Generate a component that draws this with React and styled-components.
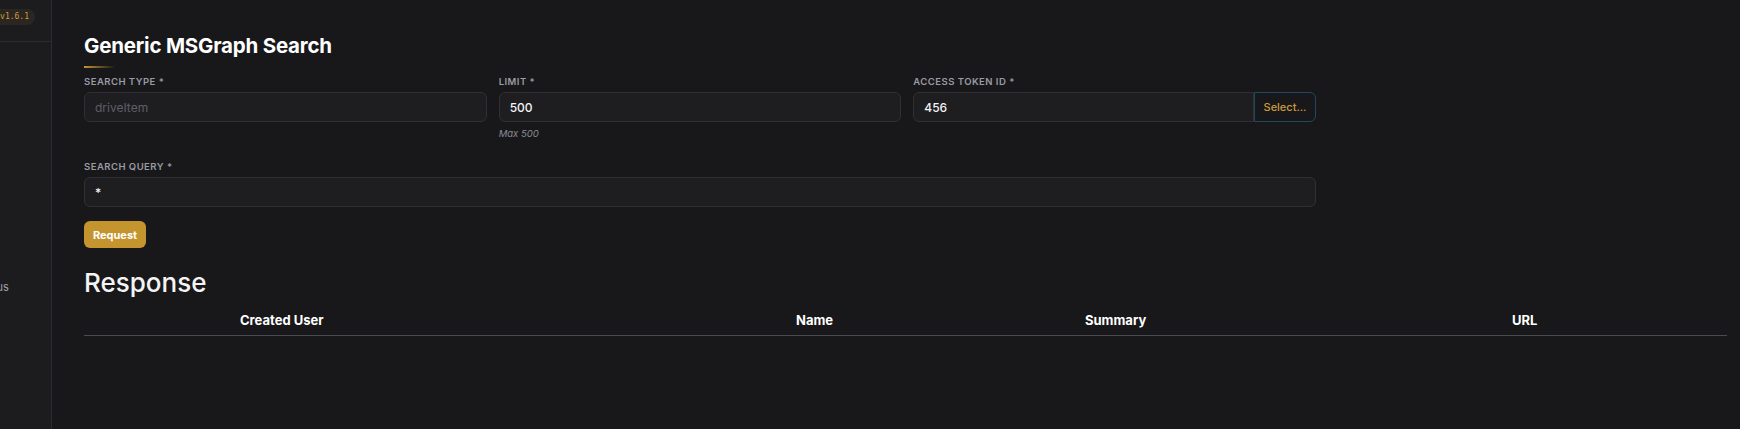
import React from 'react'
import styled, { createGlobalStyle } from 'styled-components'

const GlobalStyle = createGlobalStyle`
  * { box-sizing: border-box; }
  html, body {
    margin: 0;
    padding: 0;
    background: #18181b;
    color: #f4f4f5;
    font-family: Inter, "Noto Sans", "Liberation Sans", sans-serif;
  }
`

const Shell = styled.div`
  display: flex;
  height: 429px;
  background: #18181b;
  overflow: hidden;
`

/* drawer is collapsed: only its right edge peeks out */
const Sidebar = styled.aside`
  width: 52px;
  flex-shrink: 0;
  background: #1c1c1f;
  border-right: 1px solid #2c2c30;
  overflow: hidden;
`

const Drawer = styled.div`
  width: 240px;
  margin-left: -189px;
  display: flex;
  flex-direction: column;
`

const DrawerHead = styled.div`
  height: 42px;
  display: flex;
  align-items: center;
  justify-content: flex-end;
  padding-right: 16px;
  border-bottom: 1px solid #2c2c30;
`

const Version = styled.span`
  font-family: "DejaVu Sans Mono", "Liberation Mono", monospace;
  font-size: 8px;
  line-height: 16px;
  height: 16px;
  color: #d49b3a;
  background: #2a2722;
  border-radius: 8px;
  padding: 0 6px 0 10px;
  margin-bottom: 8px;
`

const Nav = styled.nav`
  display: flex;
  flex-direction: column;
  padding: 0 0 0 165px;
  margin-top: 238px;
`

const NavItem = styled.a`
  font-size: 11px;
  color: #a1a1aa;
  text-decoration: none;
  white-space: nowrap;
`

const Main = styled.main`
  flex: 1;
  padding: 32px 13px 0 32px;
`

const Title = styled.h2`
  margin: 0;
  font-size: 20.5px;
  line-height: 28px;
  font-weight: 700;
  letter-spacing: -0.01em;
  color: #ffffff;
`

const TitleBar = styled.div`
  width: 31px;
  height: 2px;
  margin: 6px 0 8px;
  background: linear-gradient(90deg, #c9952f, rgba(201, 149, 47, 0));
`

const Form = styled.form`
  max-width: 1232px;
  display: flex;
  flex-direction: column;
`

const Row = styled.div`
  display: grid;
  grid-template-columns: ${p => (p.$cols ? `repeat(${p.$cols}, 1fr)` : '1fr')};
  gap: 12px;
  margin-bottom: ${p => p.$spacing || 0}px;
`

const Field = styled.div`
  display: flex;
  flex-direction: column;
`

const Label = styled.label`
  font-size: 9.5px;
  font-weight: 600;
  letter-spacing: 0.05em;
  text-transform: uppercase;
  color: #9b9ba3;
  line-height: 12px;
  margin-bottom: 4px;
`

const Input = styled.input`
  height: 30px;
  width: 100%;
  background: #1e1e21;
  border: 1px solid #2f2f34;
  border-radius: ${p => (p.$joined ? '6px 0 0 6px' : '6px')};
  padding: 0 10px;
  font-family: inherit;
  font-size: 12px;
  font-weight: 500;
  color: #f4f4f5;
  outline: none;

  &::placeholder {
    color: #5f5f66;
    font-weight: 400;
  }
`

const InputGroup = styled.div`
  display: flex;
`

const SelectButton = styled.button`
  height: 30px;
  width: 62px;
  flex-shrink: 0;
  background: #18181b;
  border: 1px solid #1d4a5e;
  border-radius: 0 6px 6px 0;
  font-family: inherit;
  font-size: 11px;
  font-weight: 500;
  color: #c99a3e;
  cursor: pointer;
  padding: 0;
`

const Hint = styled.span`
  font-size: 9.5px;
  font-style: italic;
  color: #8c8c94;
  margin-top: 6px;
  line-height: 12px;
`

const RequestButton = styled.button`
  align-self: flex-start;
  height: 27px;
  width: 62px;
  background: #c4952f;
  border: none;
  border-radius: 6px;
  font-family: inherit;
  font-size: 11px;
  font-weight: 700;
  color: #ffffff;
  cursor: pointer;
  padding: 0;
`

const Heading = styled.h3`
  margin: 19px 0 0;
  font-size: 26px;
  line-height: 32px;
  font-weight: 500;
  color: #f4f4f5;
`

const Table = styled.div`
  margin-top: 5px;
`

const HeadRow = styled.div`
  display: grid;
  grid-template-columns: 556px 289px 427px 1fr;
  padding-left: 156px;
  height: 32px;
  align-items: center;
  border-bottom: 1px solid #4a4a52;
`

const HeadCell = styled.div`
  font-size: 13px;
  font-weight: 700;
  color: #ffffff;
  white-space: nowrap;
`

export default function App() {
  return (
    <>
      <GlobalStyle />
      <Shell>
        <Sidebar>
          <Drawer>
            <DrawerHead>
              <Version>v1.6.1</Version>
            </DrawerHead>
            <Nav>
              <NavItem href="#">Status</NavItem>
            </Nav>
          </Drawer>
        </Sidebar>

        <Main>
          <Title>Generic MSGraph Search</Title>
          <TitleBar />

          <Form onSubmit={e => e.preventDefault()}>
            <Row $cols={3} $spacing={21}>
              <Field>
                <Label>Search Type *</Label>
                <Input placeholder="driveItem" />
              </Field>
              <Field>
                <Label>Limit *</Label>
                <Input defaultValue="500" />
                <Hint>Max 500</Hint>
              </Field>
              <Field>
                <Label>Access Token ID *</Label>
                <InputGroup>
                  <Input $joined defaultValue="456" />
                  <SelectButton type="button">Select...</SelectButton>
                </InputGroup>
              </Field>
            </Row>

            <Row $spacing={14}>
              <Field>
                <Label>Search Query *</Label>
                <Input defaultValue="*" />
              </Field>
            </Row>

            <RequestButton type="submit">Request</RequestButton>
          </Form>

          <Heading>Response</Heading>
          <Table>
            <HeadRow>
              <HeadCell>Created User</HeadCell>
              <HeadCell>Name</HeadCell>
              <HeadCell>Summary</HeadCell>
              <HeadCell>URL</HeadCell>
            </HeadRow>
          </Table>
        </Main>
      </Shell>
    </>
  )
}
